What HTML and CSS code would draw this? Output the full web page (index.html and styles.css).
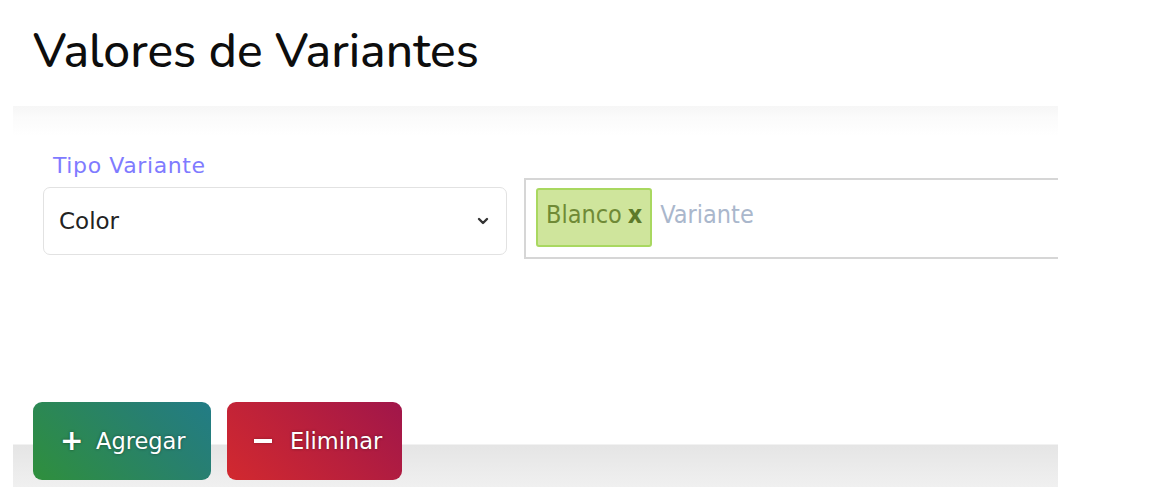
FILE: index.html
```html
<!DOCTYPE html>
<html lang="es">
<head>
<meta charset="utf-8">
<title>Valores de Variantes</title>
<link rel="stylesheet" href="styles.css">
</head>
<body>
<div class="page">
  <h1 class="title">Valores de Variantes</h1>
  <section class="card">
    <div class="fields">
      <div class="field">
        <label class="field-label">Tipo Variante</label>
        <div class="select">
          <span class="select-value">Color</span>
          <svg class="chevron" width="12" height="8" viewBox="0 0 12 8"><path d="M2 2 L6 6 L10 2" fill="none" stroke="#333" stroke-width="2.4" stroke-linecap="round" stroke-linejoin="round"/></svg>
        </div>
      </div>
      <div class="tags-input">
        <span class="tag">Blanco <b class="tag-x">x</b></span>
        <span class="placeholder">Variante</span>
      </div>
    </div>
    <div class="actions">
      <button class="btn btn-add"><span class="btn-icon">+</span>Agregar</button>
      <button class="btn btn-del"><span class="btn-icon minus"></span>Eliminar</button>
    </div>
  </section>
</div>
</body>
</html>
```
FILE: styles.css
```css
html, body {
  margin: 0;
  padding: 0;
  background: #fff;
}
.page {
  width: 1058px;
  height: 487px;
  overflow: hidden;
  display: flex;
  flex-direction: column;
}
.title {
  margin: 0;
  padding: 24px 0 0 33px;
  height: 106px;
  flex-shrink: 0;
  box-sizing: border-box;
  font-family: "Nunito", Lato, "Open Sans", sans-serif;
  font-weight: 500;
  font-size: 48px;
  line-height: 54px;
  color: #0d0d0d;
}
.card {
  margin-left: 13px;
  flex: 1;
  background: linear-gradient(to bottom, #f6f6f6 0px, #fbfbfb 12px, #fff 30px, #fff 338px, #e5e5e5 339px, #f0f0f0 100%);
  padding: 47px 0 0 30px;
  box-sizing: border-box;
  display: flex;
  flex-direction: column;
}
.fields {
  display: flex;
  align-items: flex-start;
  gap: 17px;
}
.field {
  width: 464px;
  flex-shrink: 0;
  display: flex;
  flex-direction: column;
}
.field-label {
  font-family: "DejaVu Sans", Verdana, sans-serif;
  font-size: 22px;
  letter-spacing: 0.6px;
  line-height: 26px;
  color: #7f7bff;
  padding-left: 10px;
  height: 34px;
}
.select {
  height: 68px;
  box-sizing: border-box;
  border: 1px solid #e2e2e2;
  border-radius: 7px;
  display: flex;
  align-items: center;
  justify-content: space-between;
  padding: 0 17px 0 15px;
  background: #fff;
}
.select-value {
  font-family: "DejaVu Sans", Verdana, sans-serif;
  font-size: 23px;
  color: #222;
}
.chevron {
  display: block;
}
.tags-input {
  margin-top: 25px;
  width: 620px;
  flex-shrink: 0;
  height: 81px;
  box-sizing: border-box;
  border: 2px solid #d6d6d6;
  background: #fff;
  display: flex;
  align-items: flex-start;
  padding: 8px 10px;
  gap: 8px;
}
.tag {
  height: 59px;
  box-sizing: border-box;
  padding: 0 8px 6px 8px;
  display: flex;
  align-items: center;
  gap: 6px;
  background: #cfe59c;
  border: 2px solid #a9d860;
  border-radius: 3px;
  font-family: "DejaVu Sans Condensed", "DejaVu Sans", sans-serif;
  font-stretch: condensed;
  font-size: 25px;
  color: #6f8a36;
}
.tag-x {
  font-weight: bold;
  color: #5d7a2a;
}
.placeholder {
  padding-top: 12px;
  font-family: "DejaVu Sans Condensed", "DejaVu Sans", sans-serif;
  font-stretch: condensed;
  font-size: 25px;
  color: #aab7cc;
}
.actions {
  margin-top: 143px;
  margin-left: -10px;
  display: flex;
  gap: 16px;
}
.btn {
  height: 78px;
  border: none;
  border-radius: 9px;
  display: flex;
  align-items: center;
  font-family: "DejaVu Sans", Verdana, sans-serif;
  font-size: 22.5px;
  color: #fff;
  text-shadow: 0 0 3px rgba(0,0,0,0.45);
  padding: 0 0 0 27px;
  box-sizing: border-box;
  cursor: pointer;
}
.btn-add {
  width: 178px;
  background: linear-gradient(45deg, #2f8f3c 0%, #277f71 70%, #227c86 100%);
}
.btn-del {
  width: 175px;
  background: linear-gradient(45deg, #d2292f 0%, #b71f3d 55%, #a0164a 100%);
}
.btn-icon {
  display: inline-block;
  width: 18px;
  margin-right: 18px;
  font-size: 28px;
  font-weight: bold;
  line-height: 1;
}
.btn-icon.minus {
  height: 4px;
  background: #fff;
  box-shadow: 0 0 3px rgba(0,0,0,0.3);
  width: 18px;
}
```
